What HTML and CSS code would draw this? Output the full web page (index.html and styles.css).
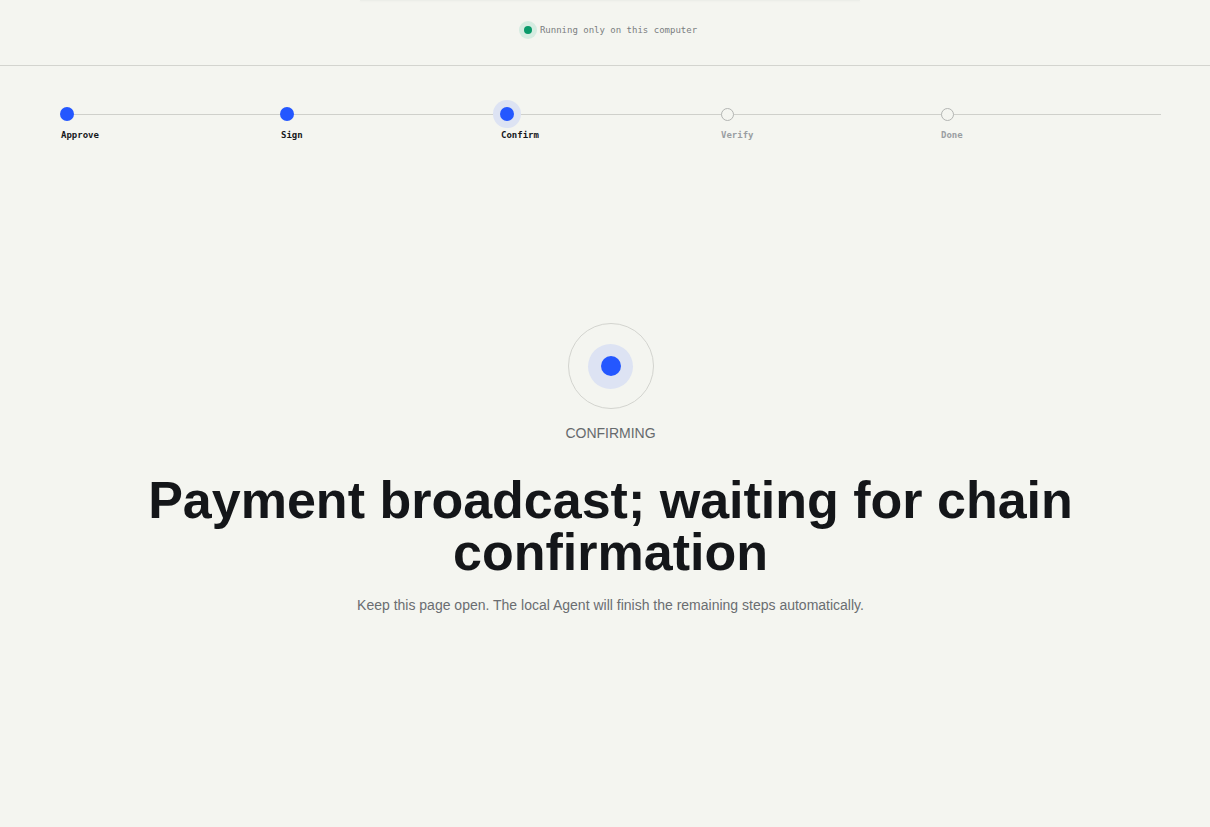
FILE: index.html
```html
<!DOCTYPE html>
<html lang="en">
<head>
<meta charset="utf-8">
<title>Confirming payment</title>
<link rel="stylesheet" href="styles.css">
</head>
<body>
<div class="topshadow"></div>
<header class="header">
  <div class="badge">
    <span class="badge-dot"><span></span></span>
    <span class="badge-text">Running only on this computer</span>
  </div>
</header>
<div class="wrap">
  <ol class="stepper">
    <li class="step done"><span class="dot"></span><span class="label">Approve</span></li>
    <li class="step done"><span class="dot"></span><span class="label">Sign</span></li>
    <li class="step current"><span class="dot"></span><span class="label">Confirm</span></li>
    <li class="step todo"><span class="dot"></span><span class="label">Verify</span></li>
    <li class="step todo"><span class="dot"></span><span class="label">Done</span></li>
  </ol>
  <main class="status">
    <div class="ring"><div class="halo"><div class="core"></div></div></div>
    <div class="state">CONFIRMING</div>
    <h1 class="title">Payment broadcast; waiting for chain confirmation</h1>
    <p class="sub">Keep this page open. The local Agent will finish the remaining steps automatically.</p>
  </main>
</div>
</body>
</html>
```
FILE: styles.css
```css
html, body {
  margin: 0;
  padding: 0;
  background: #f4f5f0;
}
body {
  font-family: "Liberation Sans", Arial, sans-serif;
  color: #141619;
  min-height: 827px;
  position: relative;
}
.topshadow {
  position: absolute;
  top: 0;
  left: 360px;
  width: 500px;
  height: 1px;
  background: #eceee9;
  box-shadow: 0 1px 2px rgba(0,0,0,0.03);
}
.header {
  height: 66px;
  border-bottom: 1px solid #d3d4cf;
  display: flex;
  justify-content: center;
  align-items: center;
  box-sizing: border-box;
  padding-left: 6px;
}
.badge {
  display: flex;
  align-items: center;
  gap: 3px;
  margin-top: -6px;
}
.badge-dot {
  width: 18px;
  height: 18px;
  border-radius: 50%;
  background: #d5ece1;
  display: flex;
  align-items: center;
  justify-content: center;
}
.badge-dot span {
  width: 8px;
  height: 8px;
  border-radius: 50%;
  background: #0a9a6a;
}
.badge-text {
  font-family: "DejaVu Sans Mono", monospace;
  font-size: 9px;
  color: #7a7d80;
}
.wrap {
  margin-left: 60px;
  width: 1101px;
}
.stepper {
  list-style: none;
  margin: 0;
  padding: 41px 0 0;
  display: grid;
  grid-template-columns: repeat(5, 220px);
  position: relative;
}
.stepper::before {
  content: "";
  position: absolute;
  left: 7px;
  right: 0;
  top: 48px;
  height: 1px;
  background: #cfd0cb;
}
.step {
  display: flex;
  flex-direction: column;
  align-items: flex-start;
  position: relative;
}
.dot {
  width: 14px;
  height: 14px;
  border-radius: 50%;
  box-sizing: border-box;
  position: relative;
  z-index: 1;
}
.done .dot, .current .dot {
  background: #2457ff;
}
.current .dot {
  box-shadow: 0 0 0 7px #dde3f3;
}
.todo .dot {
  width: 13px;
  height: 13px;
  margin-left: 1px;
  margin-top: 1px;
  margin-bottom: 0;
  background: #f4f5f0;
  border: 1px solid #b3b5b3;
}
.label {
  font-family: "DejaVu Sans Mono", monospace;
  font-weight: bold;
  font-size: 9px;
  margin-top: 9px;
  margin-left: 1px;
  color: #16181b;
}
.todo .label {
  color: #9a9ea2;
}
.status {
  display: flex;
  flex-direction: column;
  align-items: center;
  padding-top: 183px;
}
.ring {
  width: 86px;
  height: 86px;
  border-radius: 50%;
  border: 1px solid #d3d4cf;
  box-sizing: border-box;
  display: flex;
  align-items: center;
  justify-content: center;
}
.halo {
  width: 45px;
  height: 45px;
  border-radius: 50%;
  background: #dde3f3;
  display: flex;
  align-items: center;
  justify-content: center;
}
.core {
  width: 20px;
  height: 20px;
  border-radius: 50%;
  background: #2457ff;
}
.state {
  margin-top: 16px;
  font-size: 14px;
  color: #666a6d;
  line-height: 16px;
}
.title {
  margin: 33px 0 0;
  font-size: 52px;
  font-weight: bold;
  line-height: 52px;
  text-align: center;
  color: #141619;
  max-width: 980px;
}
.sub {
  margin: 18px 0 0;
  font-size: 14px;
  line-height: 18px;
  color: #6a6d70;
}
```
